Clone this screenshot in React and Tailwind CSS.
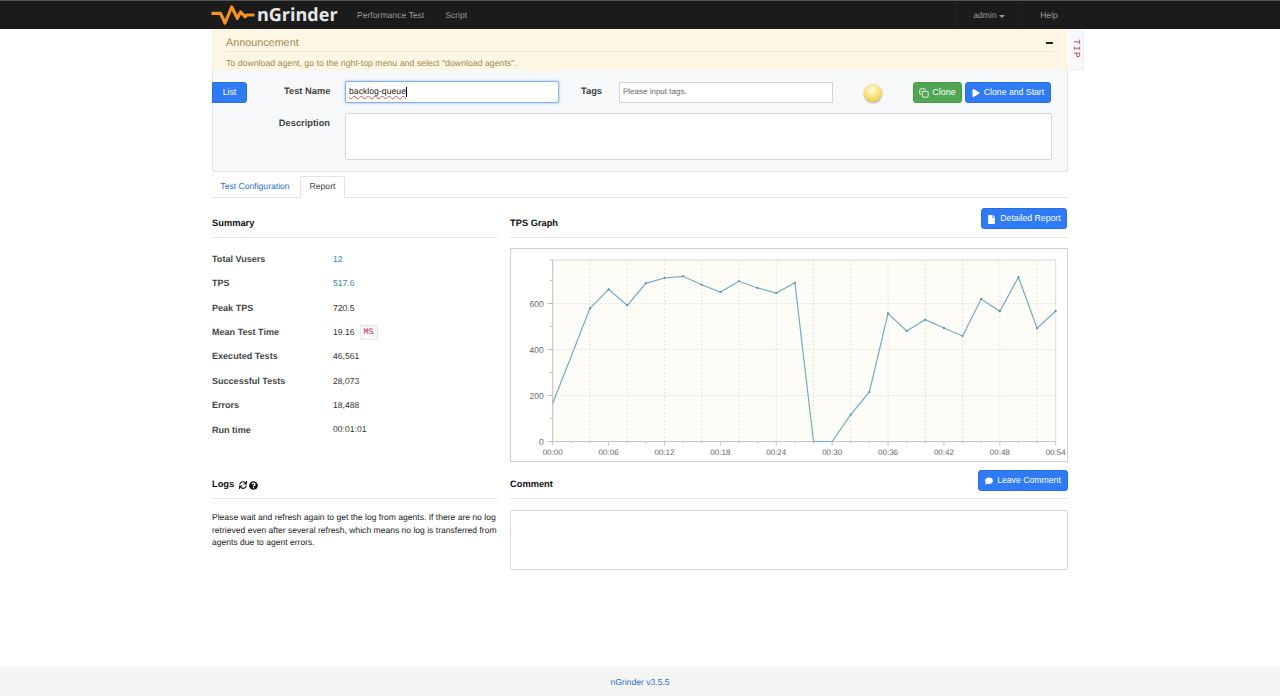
import { FaSync, FaQuestionCircle, FaFile, FaComment, FaPlay } from "react-icons/fa";
import { Copy } from "lucide-react";

const summary = [
  ["Total Vusers", "12", true],
  ["TPS", "517.6", true],
  ["Peak TPS", "720.5"],
  ["Mean Test Time", "19.16", false, true],
  ["Executed Tests", "46,561"],
  ["Successful Tests", "28,073"],
  ["Errors", "18,488"],
  ["Run time", "00:01:01"],
];

// y pixel of each sample in the chart, one every 2 seconds
const samples = [
  403.3, 356, 308.3, 289.3, 305.3, 283.3, 278, 276.3, 284.7, 292, 281.3, 288, 293, 282.7,
  441.5, 441.5, 414.7, 392, 313.3, 331, 319.7, 328, 336, 299, 311.3, 277.3, 328.3, 311,
];

const plotLeft = 41.7;
const plotRight = 544.7;
const plotTop = 11;
const plotBottom = 192.5;
const stepX = (plotRight - plotLeft) / 27;
const xAt = (i) => plotLeft + i * stepX;
const yAt = (py) => py - 249;
const hiddenDots = [0, 1, 14, 15];

function TpsChart() {
  const points = samples.map((py, i) => [xAt(i), yAt(py)]);
  const line = points.map(([x, y]) => `${x},${y}`).join(" ");
  const xLabels = ["00:00", "00:06", "00:12", "00:18", "00:24", "00:30", "00:36", "00:42", "00:48", "00:54"];
  const yTicks = [
    [192.5, "0"],
    [146.5, "200"],
    [100.5, "400"],
    [54.5, "600"],
  ];
  const minorY = [169.5, 123.5, 77.5, 31.5, 11];

  return (
    <svg width="556" height="212" className="block">
      <rect x={plotLeft} y={plotTop} width={plotRight - plotLeft} height={plotBottom - plotTop} fill="#fdfcf6" />
      {yTicks.slice(1).map(([y]) => (
        <line key={y} x1={plotLeft} x2={plotRight} y1={y} y2={y} stroke="#e4e4de" strokeDasharray="2 2" />
      ))}
      {samples.map((_, i) =>
        i > 0 && i < 27 && i % 2 === 0 ? (
          <line key={i} x1={xAt(i)} x2={xAt(i)} y1={plotTop} y2={plotBottom} stroke="#e4e4de" strokeDasharray="2 2" />
        ) : null
      )}
      <line x1={plotLeft} x2={plotRight} y1={plotTop} y2={plotTop} stroke="#d4d4d4" />
      <line x1={plotRight} x2={plotRight} y1={plotTop} y2={plotBottom} stroke="#dddddd" />
      <line x1={plotLeft} x2={plotLeft} y1={plotTop} y2={plotBottom} stroke="#bdbdbd" />
      <line x1={plotLeft} x2={plotRight} y1={plotBottom} y2={plotBottom} stroke="#c4c4c4" />
      {yTicks.map(([y]) => (
        <line key={y} x1={plotLeft - 5} x2={plotLeft} y1={y} y2={y} stroke="#bdbdbd" />
      ))}
      {minorY.map((y) => (
        <line key={y} x1={plotLeft - 3} x2={plotLeft} y1={y} y2={y} stroke="#c8c8c8" />
      ))}
      {samples.map((_, i) => (
        <line key={i} x1={xAt(i)} x2={xAt(i)} y1={plotBottom} y2={plotBottom + (i % 3 === 0 ? 4 : 2)} stroke="#c4c4c4" />
      ))}
      <polyline points={line} fill="none" stroke="#74adbf" strokeWidth="1.2" />
      {points.map(([x, y], i) =>
        hiddenDots.includes(i) ? null : <circle key={i} cx={x} cy={y} r="1" fill="#3f8ea6" />
      )}
      {yTicks.map(([y, label]) => (
        <text key={label} x={plotLeft - 9} y={y + 3} textAnchor="end" fontSize="8.5" fill="#666666">
          {label}
        </text>
      ))}
      {xLabels.map((label, i) => (
        <text key={label} x={xAt(i * 3)} y={206} textAnchor="middle" fontSize="8" fill="#666666">
          {label}
        </text>
      ))}
    </svg>
  );
}

function Logo() {
  return (
    <div className="-ml-px flex w-[146px] items-center">
      <svg width="44" height="22" viewBox="0 0 44 22" fill="none">
        <path
          d="M0.5 9.3 H9.5 L14 19 L20.7 3 L26.3 14.3 L29.7 8 L34 12.7 L36 11 H43.5"
          stroke="#f39223"
          strokeWidth="3.2"
          strokeLinejoin="round"
        />
      </svg>
      <span className="ml-[2px] font-['Open_Sans'] text-[18px] font-bold leading-none text-[#e6e6e6]">nGrinder</span>
    </div>
  );
}

function BlueButton({ className = "", children }) {
  return (
    <button className={`flex items-center justify-center rounded-[3px] border border-[#2a6fe0] bg-[#2f7bf5] pt-px text-[8.7px] text-white ${className}`}>
      {children}
    </button>
  );
}

function SectionHeading({ children, right, className = "" }) {
  return (
    <div className={`flex items-center justify-between border-b border-[#e6e6e6] ${className}`}>
      <div className="flex items-center pt-[2px] text-[9.3px] font-bold text-[#111111]">{children}</div>
      {right}
    </div>
  );
}

export default function App() {
  return (
    <div className="flex min-h-[696px] flex-col bg-white font-['Liberation_Sans',Arial,sans-serif] text-[8.6px] text-[#333333] [text-rendering:geometricPrecision]">
      <header className="h-[29px] border-t border-[#555555] bg-[#1b1b1b]">
        <div className="mx-auto flex h-full w-[856px] items-center">
          <Logo />
          <nav className="flex items-center gap-[21px] pt-px text-[#999999]">
            <span>Performance Test</span>
            <span>Script</span>
          </nav>
          <div className="-mr-[8px] ml-auto flex h-full items-center pt-px text-[#999999]">
            <span className="flex h-full w-[66px] items-center justify-center border-x border-[#222222]">
              admin
              <span className="ml-[2px] mt-[1px] h-0 w-0 border-x-[3px] border-t-[3px] border-x-transparent border-t-[#999999]" />
            </span>
            <span className="flex h-full w-[54px] items-center justify-center">Help</span>
          </div>
        </div>
      </header>

      <main className="mx-auto w-[856px]">
        <section className="relative h-[41px] bg-[#fcf6e2] pl-[14px] pr-[14px] text-[#a08a4e]">
          <div className="flex h-[23px] items-center justify-between border-b border-[#ece7d3] pt-[6px]">
            <span className="text-[10.8px]">Announcement</span>
            <span className="mr-[1px] h-[2px] w-[7px] bg-[#222222]" />
          </div>
          <p className="mt-[5px] text-[8.75px] leading-[12px]">To download agent, go to the right-top menu and select "download agents".</p>
          <div className="absolute left-[857px] top-0 flex h-[41px] w-[15px] items-center justify-center border-b border-r border-[#eeeeee] bg-[#f8f8fa]">
            <span className="rotate-90 font-['Liberation_Mono'] text-[9px] tracking-[1px] text-[#b8284c]">TIP</span>
          </div>
        </section>

        <section className="h-[102px] rounded-b-[2px] border border-t-0 border-[#e3e3e3] bg-[#f6f8fa]">
          <div className="flex items-center pt-[11px]">
            <BlueButton className="-ml-[1px] h-[21px] w-[35px] rounded-l-none">List</BlueButton>
            <label className="ml-[37px] w-[47px] whitespace-nowrap text-[9.3px] font-bold text-[#444444]">Test Name</label>
            <div className="ml-[14px] flex h-[22px] w-[214px] items-center rounded-[2px] border border-[#7fb2ee] bg-white px-[3px] text-[8.7px] text-[#222222] shadow-[0_0_3px_#8fbcf0]">
              <span className="underline decoration-[#e05050] decoration-wavy">backlog-queue</span>
              <span className="h-[10px] w-px bg-black" />
            </div>
            <label className="ml-[22px] w-[38px] text-[9.3px] font-bold text-[#444444]">Tags</label>
            <div className="flex h-[21px] w-[214px] items-center border border-[#d4d4d4] bg-white px-[3px] text-[8px] text-[#666666]">
              Please input tags.
            </div>
            <div className="ml-[31px] mt-[2px] h-[18px] w-[18px] rounded-full bg-[radial-gradient(circle_at_45%_35%,#fffde0,#f9dd6a_55%,#e9aa3a)] shadow-[0_1px_2px_#999999]" />
            <button className="ml-[31px] flex h-[21px] w-[49px] items-center justify-center gap-[3px] rounded-[3px] border border-[#4b9a4b] bg-[#52a552] pt-px text-[9px] text-white">
              <Copy size={10} />
              Clone
            </button>
            <BlueButton className="ml-[3px] h-[21px] w-[86px] gap-[4px]">
              <FaPlay size={8} />
              Clone and Start
            </BlueButton>
          </div>
          <div className="mt-[10px] flex items-start">
            <label className="ml-[64px] mt-[4px] w-[53px] whitespace-nowrap text-right text-[9.3px] font-bold text-[#444444]">Description</label>
            <div className="ml-[15px] h-[47px] w-[707px] rounded-[2px] border border-[#d8d8d8] bg-white" />
          </div>
        </section>

        <div className="mt-[4px] flex h-[22px] items-end border-b border-[#e3e3e3]">
          <span className="flex h-[21px] w-[88px] items-center justify-center pr-[2px] text-[#1f6fd6]">Test Configuration</span>
          <span className="-mb-px flex h-[22px] w-[45px] items-center justify-center rounded-t-[2px] border border-[#e3e3e3] border-b-white bg-white pb-px text-[#444444]">
            Report
          </span>
        </div>

        <div className="mt-[10px] grid grid-cols-[285px_558px] gap-x-[13px]">
          <div>
            <SectionHeading className="h-[30px]">Summary</SectionHeading>
            <div className="mt-[9px] flex flex-col">
              {summary.map(([label, value, link, unit]) => (
                <div key={label} className="flex h-[24.4px] items-center">
                  <span className="w-[121px] pt-px text-[9.05px] font-bold text-[#444444]">{label}</span>
                  <span className={link ? "text-[#3a87ad]" : "text-[#333333]"}>{value}</span>
                  {unit && (
                    <span className="ml-[5px] rounded-[2px] border border-[#e6e6e6] bg-[#f7f7f9] px-[3px] py-px font-['Liberation_Mono'] text-[8.5px] leading-[11px] text-[#c7254e]">
                      MS
                    </span>
                  )}
                </div>
              ))}
            </div>
          </div>
          <div>
            <SectionHeading
              className="h-[30px]"
              right={
                <BlueButton className="-mt-[8px] mr-[1px] h-[21px] w-[86px] gap-[4px]">
                  <FaFile size={9} />
                  Detailed Report
                </BlueButton>
              }
            >
              TPS Graph
            </SectionHeading>
            <div className="mt-[10px] h-[214px] w-[558px] border border-[#cfcfcf] bg-white">
              <TpsChart />
            </div>
          </div>
        </div>

        <div className="mt-[8px] grid grid-cols-[285px_558px] gap-x-[13px]">
          <div>
            <SectionHeading className="h-[29px]">
              Logs
              <FaSync size={8} className="ml-[5px]" />
              <FaQuestionCircle size={9} className="ml-[2px]" />
            </SectionHeading>
            <p className="mt-[12px] text-[8.55px] leading-[12.7px] text-[#222222]">
              Please wait and refresh again to get the log from agents. If there are no log retrieved even after several refresh, which means no log is transferred from agents due to agent errors.
            </p>
          </div>
          <div>
            <SectionHeading
              className="h-[29px]"
              right={
                <BlueButton className="-mt-[7px] h-[21px] w-[90px] gap-[4px]">
                  <FaComment size={8} />
                  Leave Comment
                </BlueButton>
              }
            >
              Comment
            </SectionHeading>
            <div className="mt-[11px] h-[60px] rounded-[2px] border border-[#d8d8d8] bg-white" />
          </div>
        </div>
      </main>

      <footer className="mt-auto flex h-[29px] items-center justify-center bg-[#f5f5f3] pt-[2px] text-[#1f6fd6]">nGrinder v3.5.5</footer>
    </div>
  );
}
